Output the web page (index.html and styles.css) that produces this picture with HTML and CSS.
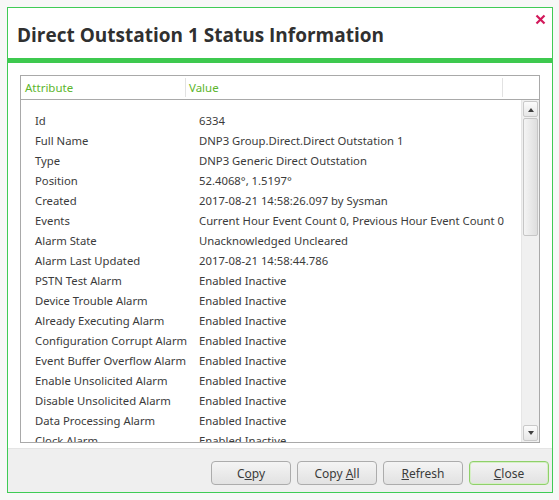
FILE: index.html
```html
<!DOCTYPE html>
<html>
	<head>
		<meta charset="UTF-8">
		<title>Direct Outstation 1 Status Information</title>
		<link rel="stylesheet" href="styles.css">
	</head>
	<body>
		<div class="dialog">
			<div class="titlebar">
				<h1>Direct Outstation 1 Status Information</h1>
				<span class="close">
					<svg width="11" height="11" viewBox="0 0 11 11"><path d="M1.5 1.5 L9.5 9.5 M9.5 1.5 L1.5 9.5" stroke="#d2185a" stroke-width="2.2" fill="none"/></svg>
				</span>
			</div>
			<div class="accent"></div>
			<div class="content">
				<div class="listbox">
					<div class="head">
						<div class="col1">Attribute</div>
						<div class="col2">Value</div>
						<div class="col3"></div>
					</div>
					<div class="body">
						<div class="rows">
							<div class="row"><span class="k">Id</span><span class="v">6334</span></div>
							<div class="row"><span class="k">Full Name</span><span class="v">DNP3 Group.Direct.Direct Outstation 1</span></div>
							<div class="row"><span class="k">Type</span><span class="v">DNP3 Generic Direct Outstation</span></div>
							<div class="row"><span class="k">Position</span><span class="v">52.4068°, 1.5197°</span></div>
							<div class="row"><span class="k">Created</span><span class="v">2017-08-21 14:58:26.097 by Sysman</span></div>
							<div class="row"><span class="k">Events</span><span class="v">Current Hour Event Count 0, Previous Hour Event Count 0</span></div>
							<div class="row"><span class="k">Alarm State</span><span class="v">Unacknowledged Uncleared</span></div>
							<div class="row"><span class="k">Alarm Last Updated</span><span class="v">2017-08-21 14:58:44.786</span></div>
							<div class="row"><span class="k">PSTN Test Alarm</span><span class="v">Enabled Inactive</span></div>
							<div class="row"><span class="k">Device Trouble Alarm</span><span class="v">Enabled Inactive</span></div>
							<div class="row"><span class="k">Already Executing Alarm</span><span class="v">Enabled Inactive</span></div>
							<div class="row"><span class="k">Configuration Corrupt Alarm</span><span class="v">Enabled Inactive</span></div>
							<div class="row"><span class="k">Event Buffer Overflow Alarm</span><span class="v">Enabled Inactive</span></div>
							<div class="row"><span class="k">Enable Unsolicited Alarm</span><span class="v">Enabled Inactive</span></div>
							<div class="row"><span class="k">Disable Unsolicited Alarm</span><span class="v">Enabled Inactive</span></div>
							<div class="row"><span class="k">Data Processing Alarm</span><span class="v">Enabled Inactive</span></div>
							<div class="row"><span class="k">Clock Alarm</span><span class="v">Enabled Inactive</span></div>
						</div>
						<div class="scrollbar">
							<div class="arrow up"></div>
							<div class="track"><div class="thumb"></div></div>
							<div class="arrow down"></div>
						</div>
					</div>
				</div>
			</div>
			<div class="footer">
				<button class="btn">C<u>o</u>py</button>
				<button class="btn">Copy <u>A</u>ll</button>
				<button class="btn"><u>R</u>efresh</button>
				<button class="btn default"><u>C</u>lose</button>
			</div>
		</div>
	</body>
</html>
```
FILE: styles.css
```css
html, body{
	margin: 0;
	padding: 0;
}
body{
	background: #f7f7f7;
	font: 11.3px/20px "Noto Sans", "Open Sans", sans-serif;
	color: #3b3b3b;
}
.dialog{
	width: 546px;
	height: 486px;
	margin: 7px;
	border: 1px solid #3fcb55;
	box-sizing: border-box;
	background: #fff;
	display: flex;
	flex-direction: column;
}
.titlebar{
	height: 50px;
	display: flex;
	justify-content: space-between;
	align-items: flex-start;
}
.titlebar h1{
	margin: 0;
	padding: 15px 0 0 9px;
	font: bold 19px/24px "Open Sans", sans-serif;
	color: #303030;
}
.close{
	padding: 6px 6px 0 0;
	line-height: 0;
}
.accent{
	height: 5px;
	background: #3ec94f;
}
.content{
	flex: 1;
	padding: 12px 12px 5px 12px;
	display: flex;
	min-height: 0;
}
.listbox{
	flex: 1;
	border: 1px solid #a9a9a9;
	display: flex;
	flex-direction: column;
	min-height: 0;
}
.head{
	height: 23px;
	border-bottom: 1px solid #a9a9a9;
	display: flex;
	align-items: stretch;
	color: #5cb52c;
	font-size: 11.5px;
}
.head .col1{
	width: 165px;
	padding-left: 4px;
	box-sizing: border-box;
	border-right: 1px solid #e2e2e2;
	margin: 2px 0;
	line-height: 19px;
}
.head .col2{
	width: 317px;
	padding-left: 3px;
	box-sizing: border-box;
	border-right: 1px solid #e2e2e2;
	margin: 2px 0;
	line-height: 19px;
}
.body{
	flex: 1;
	display: flex;
	min-height: 0;
	overflow: hidden;
}
.rows{
	flex: 1;
	padding-top: 11px;
	overflow: hidden;
}
.row{
	display: flex;
	height: 20px;
	white-space: nowrap;
}
.row .k{
	width: 178px;
	padding-left: 14px;
	box-sizing: border-box;
	flex: none;
}
.scrollbar{
	width: 17px;
	display: flex;
	flex-direction: column;
	background: #f0f0f0;
	border-left: 1px solid #e6e6e6;
}
.arrow{
	height: 14px;
	margin: 1px;
	border: 1px solid #c9c9c9;
	border-radius: 2px;
	background: linear-gradient(#fbfbfb, #e6e6e6);
	position: relative;
}
.arrow:after{
	content: '';
	position: absolute;
	left: 4px;
	border: 3px solid transparent;
}
.arrow.up:after{
	top: 3px;
	border-bottom: 4px solid #404040;
}
.arrow.down:after{
	top: 5px;
	border-top: 4px solid #404040;
}
.track{
	flex: 1;
}
.thumb{
	height: 116px;
	margin: 0 1px;
	border: 1px solid #c6c6c6;
	border-radius: 2px;
	background: linear-gradient(to right, #f4f4f4, #dedede);
}
.footer{
	height: 44px;
	background: #efefef;
	border-top: 1px solid #e4e4e4;
	display: flex;
	justify-content: flex-end;
	align-items: flex-start;
	gap: 6px;
	padding: 12px 3px 0 0;
	box-sizing: border-box;
}
.btn{
	width: 80px;
	height: 24px;
	padding: 0;
	border: 1px solid #acacac;
	border-radius: 4px;
	background: linear-gradient(#f4f4f4, #e2e2e2);
	font: 12px "Noto Sans", "Open Sans", sans-serif;
	color: #3b3b3b;
}
.btn.default{
	border-color: #8fd06a;
	box-shadow: inset 0 0 0 1px #d6efc6;
}
```
